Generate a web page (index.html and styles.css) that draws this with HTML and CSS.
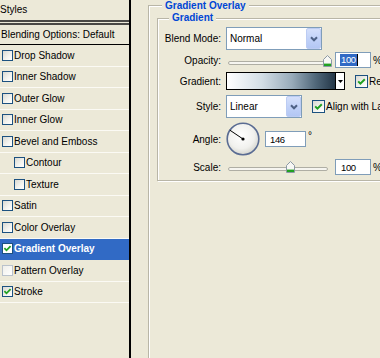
FILE: index.html
```html
<!DOCTYPE html>
<html>
<head>
<meta charset="utf-8">
<title>Layer Style - Gradient Overlay</title>
<link rel="stylesheet" href="styles.css">
</head>
<body>
<div class="window">
  <aside class="styles-panel">
    <div class="panel-title">Styles</div>
    <div class="panel-blend">Blending Options: Default</div>
    <ul class="style-list">
      <li class="item"><span class="cb"></span>Drop Shadow</li>
      <li class="item"><span class="cb"></span>Inner Shadow</li>
      <li class="item"><span class="cb"></span>Outer Glow</li>
      <li class="item"><span class="cb"></span>Inner Glow</li>
      <li class="item"><span class="cb"></span>Bevel and Emboss</li>
      <li class="item sub"><span class="cb"></span>Contour</li>
      <li class="item sub"><span class="cb"></span>Texture</li>
      <li class="item"><span class="cb"></span>Satin</li>
      <li class="item"><span class="cb"></span>Color Overlay</li>
      <li class="item selected"><span class="cb on"><svg width="9" height="9" viewBox="0 0 9 9"><path d="M1.4 4.2L3.5 6.3L7.6 2.2" fill="none" stroke="#21A121" stroke-width="1.8"/></svg></span>Gradient Overlay</li>
      <li class="item"><span class="cb faint"></span>Pattern Overlay</li>
      <li class="item"><span class="cb"><svg width="9" height="9" viewBox="0 0 9 9"><path d="M1.4 4.2L3.5 6.3L7.6 2.2" fill="none" stroke="#21A121" stroke-width="1.8"/></svg></span>Stroke</li>
    </ul>
  </aside>
  <main class="options">
    <fieldset class="group outer">
      <legend class="legend outer-legend">Gradient Overlay</legend>
      <fieldset class="group inner">
        <legend class="legend inner-legend">Gradient</legend>

        <div class="row r-blend">
          <span class="lbl">Blend Mode:</span>
          <div class="select w-blend">
            <span class="select-text">Normal</span>
            <span class="select-btn"><svg width="8" height="6" viewBox="0 0 8 6"><path d="M1 1.2L4 4.3L7 1.2" fill="none" stroke="#4D6185" stroke-width="2"/></svg></span>
          </div>
        </div>

        <div class="row r-opacity">
          <span class="lbl">Opacity:</span>
          <div class="slider">
            <span class="track"></span>
            <svg class="thumb thumb-opacity" width="9" height="12" viewBox="0 0 9 12"><path d="M0.5 11.5V4.5L4.5 0.5L8.5 4.5V11.5Z" fill="#F7F7F4" stroke="#8C99A5"/><rect x="1" y="8.6" width="7" height="2.4" fill="#21A121"/></svg>
          </div>
          <span class="field w-num"><span class="sel">100</span></span>
          <span class="unit">%</span>
        </div>

        <div class="row r-gradient">
          <span class="lbl">Gradient:</span>
          <div class="grad-picker">
            <span class="grad-swatch"></span>
            <span class="grad-arrow"><svg width="5" height="3" viewBox="0 0 5 3"><path d="M0 0H5L2.5 3Z" fill="#000"/></svg></span>
          </div>
          <span class="cb big"><svg width="11" height="11" viewBox="0 0 11 11"><path d="M2.2 5.4L4.4 7.6L8.8 3.2" fill="none" stroke="#21A121" stroke-width="2"/></svg></span>
          <span class="cb-text">Reverse</span>
        </div>

        <div class="row r-style">
          <span class="lbl">Style:</span>
          <div class="select w-style">
            <span class="select-text">Linear</span>
            <span class="select-btn"><svg width="8" height="6" viewBox="0 0 8 6"><path d="M1 1.2L4 4.3L7 1.2" fill="none" stroke="#4D6185" stroke-width="2"/></svg></span>
          </div>
          <span class="cb big"><svg width="11" height="11" viewBox="0 0 11 11"><path d="M2.2 5.4L4.4 7.6L8.8 3.2" fill="none" stroke="#21A121" stroke-width="2"/></svg></span>
          <span class="cb-text">Align with Layer</span>
        </div>

        <div class="row r-angle">
          <span class="lbl">Angle:</span>
          <svg class="dial" width="34" height="34" viewBox="0 0 34 34">
            <defs>
              <radialGradient id="dialfill" cx="45%" cy="40%" r="62%">
                <stop offset="0" stop-color="#FFFFFF"/>
                <stop offset="0.65" stop-color="#F1F1EE"/>
                <stop offset="1" stop-color="#D3D3CC"/>
              </radialGradient>
            </defs>
            <circle cx="17" cy="17" r="15.8" fill="url(#dialfill)" stroke="#5A6C93" stroke-width="1.6"/>
            <line x1="17" y1="17" x2="3.9" y2="8.2" stroke="#000" stroke-width="1"/>
            <circle cx="17" cy="17" r="1.6" fill="#000"/>
          </svg>
          <span class="field w-angle">146</span>
          <span class="unit deg">°</span>
        </div>

        <div class="row r-scale">
          <span class="lbl">Scale:</span>
          <div class="slider">
            <span class="track"></span>
            <svg class="thumb thumb-scale" width="9" height="12" viewBox="0 0 9 12"><path d="M0.5 11.5V4.5L4.5 0.5L8.5 4.5V11.5Z" fill="#F7F7F4" stroke="#8C99A5"/><rect x="1" y="8.6" width="7" height="2.4" fill="#21A121"/></svg>
          </div>
          <span class="field w-num">100</span>
          <span class="unit">%</span>
        </div>
      </fieldset>
    </fieldset>
  </main>
</div>
</body>
</html>
```

FILE: styles.css
```css
html, body {
  margin: 0;
  padding: 0;
}

body {
  width: 380px;
  height: 358px;
  overflow: hidden;
  background: #ECE9D8;
  color: #000;
  font-family: "Liberation Sans", Arial, sans-serif;
  font-size: 10px;
}

.window {
  display: flex;
  width: 380px;
  height: 358px;
  overflow: hidden;
}

/* ---------- left style list ---------- */
.styles-panel {
  flex: none;
  width: 129px;
  border-right: 2px solid #000;
  background: #ECE9D8;
  white-space: nowrap;
  overflow: hidden;
}

.panel-title {
  height: 20px;
  line-height: 19px;
  padding-left: 0;
  border-bottom: 5px double #4A4946;
}

.panel-blend {
  height: 19px;
  line-height: 19px;
  padding-left: 1px;
  border-bottom: 1px solid #000;
}

.style-list {
  list-style: none;
  margin: 0;
  padding: 0;
}

.item {
  display: flex;
  align-items: center;
  height: 21.5px;
  box-sizing: border-box;
  padding-left: 2px;
  border-bottom: 1px solid #FBFAF4;
}

.item.sub {
  padding-left: 14px;
}

.item.selected {
  background: #316AC5;
  color: #fff;
  font-weight: bold;
  border-bottom-color: #316AC5;
}

.cb {
  flex: none;
  display: inline-flex;
  align-items: center;
  justify-content: center;
  width: 11px;
  height: 11px;
  box-sizing: border-box;
  margin-right: 1px;
  border: 1px solid #1C5180;
  background: linear-gradient(135deg, #D9D9D2 0%, #F4F4F0 60%, #FFFFFF 100%);
}

.cb.on {
  background: #fff;
}

.cb.faint {
  border-color: #B9C2CC;
  background: linear-gradient(135deg, #EFEFEA, #FFFFFF);
}

.cb.big {
  width: 13px;
  height: 13px;
  margin-left: 10px;
  margin-right: 1px;
}

.cb-text {
  white-space: nowrap;
}

/* ---------- right option area ---------- */
.options {
  flex: 1;
  min-width: 0;
  padding-left: 17px;
  overflow: hidden;
}

.group {
  margin: 0;
  min-width: 0;
  border: 1px solid #B9B6A7;
  box-shadow: inset 1px 1px 0 #FFFFFF, 1px 1px 0 #FFFFFF;
}

.outer {
  width: 320px;
  height: 420px;
  padding: 0 0 0 8px;
}

.inner {
  width: 300px;
  padding: 2px 0 5px 0;
}

.legend {
  background: #ECE9D8;
  color: #0046D5;
  font-weight: bold;
  padding: 0 3px;
}

.outer-legend {
  margin-left: 5px;
  line-height: 11px;
}

.inner-legend {
  margin-left: 11px;
  line-height: 14px;
}

.row {
  display: flex;
  align-items: center;
  white-space: nowrap;
}

.lbl {
  flex: none;
  width: 63px;
  margin-right: 5px;
  text-align: right;
}

.r-blend { height: 23px; }
.r-opacity { height: 18px; margin-top: 1px; }
.r-gradient { height: 18px; margin-top: 3px; }
.r-style { height: 23px; margin-top: 5px; }
.r-angle { height: 34px; margin-top: 4px; }
.r-scale { height: 16px; margin-top: 3px; }

/* dropdowns */
.select {
  flex: none;
  display: flex;
  align-items: center;
  justify-content: space-between;
  height: 23px;
  box-sizing: border-box;
  border: 1px solid #7F9DB9;
  background: #fff;
}

.w-blend { width: 96px; }
.w-style { width: 76px; }

.select-text {
  padding-left: 3px;
}

.select-btn {
  display: flex;
  align-items: center;
  justify-content: center;
  width: 15px;
  height: 21px;
  box-sizing: border-box;
  border: 1px solid #BCCCF3;
  border-radius: 2px;
  background: linear-gradient(#D5E0FB, #C0D1F8 55%, #B3C7F4);
}

/* sliders */
.slider {
  position: relative;
  flex: none;
  width: 106px;
  height: 12px;
}

.r-opacity .slider {
  margin-top: 2px;
}

.track {
  position: absolute;
  left: 2px;
  right: 4px;
  top: 6px;
  height: 4px;
  box-sizing: border-box;
  border: 1px solid #AFAEA4;
  border-radius: 2px;
  background: #F6F5F0;
}

.thumb {
  position: absolute;
  top: 0;
}

.thumb-opacity { left: 97px; }
.thumb-scale { left: 60px; }

/* numeric fields */
.field {
  flex: none;
  display: flex;
  align-items: center;
  height: 16px;
  box-sizing: border-box;
  border: 1px solid #7F9DB9;
  background: #fff;
  padding-left: 5px;
  font-size: 9.5px;
  letter-spacing: -0.4px;
}

.w-num {
  width: 36px;
  margin-left: 3px;
}

.w-angle {
  width: 41px;
  margin-left: 5px;
  padding-left: 4px;
}

.sel {
  background: #316AC5;
  color: #fff;
  line-height: 12px;
  padding: 0 1px;
  margin-left: -1px;
  border-right: 1px solid #000;
}

.unit {
  margin-left: 2px;
}

.unit.deg {
  align-self: flex-start;
  margin-top: 8px;
}

/* gradient picker */
.grad-picker {
  flex: none;
  display: flex;
  width: 119px;
  height: 18px;
  box-sizing: border-box;
  border: 1px solid #000;
  background: #fff;
}

.grad-swatch {
  flex: 1;
  border-right: 1px solid #000;
  background: linear-gradient(to right, #FFFFFF 0%, #D3DEE6 32%, #98ABBA 60%, #51687A 82%, #243748 100%);
}

.grad-arrow {
  display: flex;
  align-items: center;
  justify-content: center;
  width: 8px;
}

/* angle dial */
.dial {
  flex: none;
  display: block;
}
```
